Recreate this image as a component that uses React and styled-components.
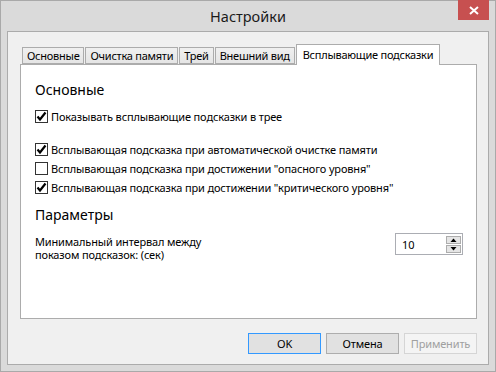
import React from 'react';
import styled, { createGlobalStyle } from 'styled-components';

// Variables
const font = {
  $ui: '"Noto Sans", "Open Sans", sans-serif'
};

const colors = {
  $frame: '#dadada',
  $frameBorder: '#a9a9a9',
  $client: '#f0f0f0',
  $clientBorder: '#ababab',
  $tabBorder: '#acacac',
  $close: '#c75050',
  $text: '#000'
};

const GlobalStyle = createGlobalStyle`
  html, body { margin: 0; padding: 0; }
  body {
    font-family: ${font.$ui};
    font-size: 11px;
    letter-spacing: -0.15px;
    color: ${colors.$text};
  }
`;

// ===========================================================================================
// styled-components
// ===========================================================================================
const Frame = styled.div`
  width: 496px;
  height: 372px;
  box-sizing: border-box;
  background: ${colors.$frame};
  border: 1px solid ${colors.$frameBorder};
  display: flex;
  flex-direction: column;
`;

const TitleBar = styled.div`
  height: 30px;
  display: grid;
  grid-template-columns: 1fr auto 1fr;
  align-items: start;
`;

const Title = styled.div`
  grid-column: 2;
  font-size: 14.5px;
  letter-spacing: 0;
  line-height: 20px;
  padding-top: 5px;
  color: #1a1a1a;
`;

const CloseBtn = styled.div`
  grid-column: 3;
  justify-self: end;
  width: 31px;
  height: 20px;
  margin-right: 6px;
  margin-top: -1px;
  background: ${colors.$close};
  display: flex;
  align-items: center;
  justify-content: center;
`;

const Client = styled.div`
  flex: 1;
  margin: 0 6px 6px 6px;
  background: ${colors.$client};
  border: 1px solid ${colors.$clientBorder};
  padding: 12px 11px 0 12px;
  display: flex;
  flex-direction: column;
  min-width: 0;
`;

const TabRow = styled.div`
  display: flex;
  align-items: flex-end;
  height: 20px;
  padding-left: 2px;
  position: relative;
  z-index: 1;
`;

const Tab = styled.div`
  box-sizing: border-box;
  height: ${p => (p.$active ? '21px' : '17px')};
  margin-bottom: ${p => (p.$active ? '-1px' : '0')};
  padding: ${p => (p.$active ? '2px 6px 0 6px' : '0 4px')};
  margin-left: ${p => (p.$first ? '0' : '1px')};
  border: 1px solid ${colors.$tabBorder};
  border-bottom: ${p => (p.$active ? 'none' : `1px solid ${colors.$tabBorder}`)};
  background: ${p => (p.$active ? '#fff' : 'linear-gradient(#f0f0f0, #e5e5e5)')};
  line-height: 15px;
  letter-spacing: -0.25px;
  white-space: nowrap;
`;

const Panel = styled.div`
  height: 255px;
  box-sizing: border-box;
  background: #fff;
  border: 1px solid ${colors.$tabBorder};
  padding: 15px 13px 0 14px;
  display: flex;
  flex-direction: column;
`;

const Heading = styled.div`
  font-size: 14px;
  letter-spacing: 0;
  line-height: 20px;
  margin-top: ${p => p.$mt || 0}px;
  margin-bottom: ${p => p.$mb || 0}px;
`;

const CheckRow = styled.label`
  display: flex;
  align-items: center;
  gap: 3px;
  height: 19px;
  margin-top: ${p => p.$mt || 0}px;
  white-space: nowrap;
`;

const Box = styled.span`
  width: 13px;
  height: 13px;
  box-sizing: border-box;
  border: 1px solid #333;
  background: #fff;
  display: flex;
  align-items: center;
  justify-content: center;
`;

const ParamRow = styled.div`
  display: flex;
  justify-content: space-between;
  align-items: flex-start;
  margin-top: 8px;
`;

const ParamLabel = styled.div`
  line-height: 13.5px;
  padding-top: 1.5px;
`;

const Spinner = styled.div`
  width: 68px;
  height: 22px;
  box-sizing: border-box;
  border: 1px solid #abadb3;
  display: flex;
  align-items: center;
  justify-content: space-between;
  padding: 1px 1px 1px 6px;
`;

const SpinButtons = styled.div`
  display: flex;
  flex-direction: column;
  gap: 1px;
`;

const SpinBtn = styled.div`
  width: 15px;
  height: 8px;
  box-sizing: border-box;
  border: 1px solid #adadad;
  background: #e5e5e5;
  display: flex;
  align-items: center;
  justify-content: center;
`;

const ButtonRow = styled.div`
  display: flex;
  justify-content: flex-end;
  gap: 5px;
  margin-top: 14px;
`;

const Button = styled.div`
  width: 73px;
  height: 21px;
  box-sizing: border-box;
  border: 1px solid ${p => (p.$default ? '#3399ff' : p.$disabled ? '#d5d5d5' : '#adadad')};
  background: ${p => (p.$disabled ? '#f4f4f4' : '#e1e1e1')};
  color: ${p => (p.$disabled ? '#a0a0a0' : '#000')};
  display: flex;
  align-items: center;
  justify-content: center;
`;

const Check = () => (
  <svg width="11" height="11" viewBox="0 0 11 11">
    <path d="M1.5 5.5 L4 8.5 L9.5 1.5" fill="none" stroke="#000" strokeWidth="2.2" />
  </svg>
);

const CheckBox = ({ checked, children, mt }) => (
  <CheckRow $mt={mt}>
    <Box>{checked && <Check />}</Box>
    <span>{children}</span>
  </CheckRow>
);

const Arrow = ({ up }) => (
  <svg width="7" height="4" viewBox="0 0 7 4">
    <path d={up ? 'M0.5 4 L3.5 0.5 L6.5 4 Z' : 'M0.5 0 L3.5 3.5 L6.5 0 Z'} fill="#000" />
  </svg>
);

// ===========================================================================================
// Main
// ===========================================================================================
const App = () => {
  return (
    <>
      <GlobalStyle />
      <Frame>
        <TitleBar>
          <Title>Настройки</Title>
          <CloseBtn>
            <svg width="10" height="9" viewBox="0 0 10 9">
              <path d="M1 1 L9 8 M9 1 L1 8" stroke="#fff" strokeWidth="2" />
            </svg>
          </CloseBtn>
        </TitleBar>
        <Client>
          <TabRow>
            <Tab $first>Основные</Tab>
            <Tab>Очистка памяти</Tab>
            <Tab>Трей</Tab>
            <Tab>Внешний вид</Tab>
            <Tab $active>Всплывающие подсказки</Tab>
          </TabRow>
          <Panel>
            <Heading $mb={7}>Основные</Heading>
            <CheckBox checked>Показывать всплывающие подсказки в трее</CheckBox>
            <CheckBox checked mt={14}>Всплывающая подсказка при автоматической очистке памяти</CheckBox>
            <CheckBox>Всплывающая подсказка при достижении "опасного уровня"</CheckBox>
            <CheckBox checked>Всплывающая подсказка при достижении "критического уровня"</CheckBox>
            <Heading $mt={8}>Параметры</Heading>
            <ParamRow>
              <ParamLabel>
                Минимальный интервал между<br />показом подсказок: (сек)
              </ParamLabel>
              <Spinner>
                <span>10</span>
                <SpinButtons>
                  <SpinBtn><Arrow up /></SpinBtn>
                  <SpinBtn><Arrow /></SpinBtn>
                </SpinButtons>
              </Spinner>
            </ParamRow>
          </Panel>
          <ButtonRow>
            <Button $default>OK</Button>
            <Button>Отмена</Button>
            <Button $disabled>Применить</Button>
          </ButtonRow>
        </Client>
      </Frame>
    </>
  );
};

export default App;
